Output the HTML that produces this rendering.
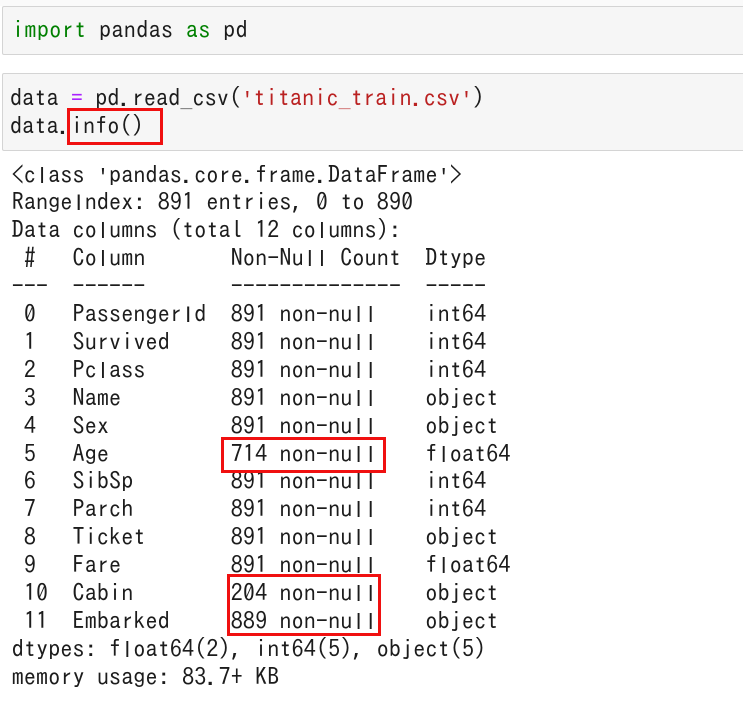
<!DOCTYPE html>
<html>
<head>
<meta charset="utf-8">
<style>
html,body{margin:0;padding:0;background:#fff;width:743px;height:705px;overflow:hidden}
body{position:relative;font-family:"IPAGothic","Liberation Mono",monospace;color:#1c1c1c}
.cell{position:absolute;left:2px;width:745px;box-sizing:border-box;background:#f6f6f6;border:1px solid #d4d4d4;border-radius:2px}
pre{position:absolute;margin:0;font-family:inherit;font-size:24px;letter-spacing:.17px;white-space:pre}
.out{left:11.7px;top:160.5px;line-height:27.9px}
.box{position:absolute;box-sizing:border-box;border:3px solid #f01010}
.k{color:#008000}.o{color:#aa22ff}.s{color:#ba2121}
.q{font-family:"Liberation Mono",monospace;font-size:20.28px;letter-spacing:0;line-height:0}
b{font-weight:normal;font-family:"Liberation Sans",sans-serif;font-size:22px;letter-spacing:0;line-height:0;padding:0 3.64px}
b.i{padding:0 3.03px}
</style>
</head>
<body>
<div style="position:absolute;left:0;top:0;width:743px;height:6px;background:#fafafa"></div>
<div class="cell" style="top:6px;height:49px"></div>
<div class="cell" style="top:73px;height:78px"></div>
<pre style="left:12px;top:15px;line-height:28px;letter-spacing:.42px"><span class="k">import</span> pandas <span class="k">as</span> pd</pre>
<pre style="left:10px;top:83px;line-height:28px">data <span class="o">=</span> pd.read_csv(<span class="s"><span class="q">'</span>titanic_train.csv<span class="q">'</span></span>)
data.info()</pre>
<pre class="out">&lt;c<b>l</b>ass <span class="q">'</span>pandas.core.frame.DataFrame<span class="q">'</span>&gt;
Range<b class="i">I</b>ndex: 891 entries, 0 to 890
Data co<b>l</b>umns (total 12 co<b>l</b>umns):
 #   Co<b>l</b>umn       Non-Nu<b>l</b><b>l</b> Count  Dtype
---  ------       --------------  -----
 0   Passenger<b class="i">I</b>d  891 non-nu<b>l</b><b>l</b>    int64
 1   Survived     891 non-nu<b>l</b><b>l</b>    int64
 2   Pc<b>l</b>ass       891 non-nu<b>l</b><b>l</b>    int64
 3   Name         891 non-nu<b>l</b><b>l</b>    object
 4   Sex          891 non-nu<b>l</b><b>l</b>    object
 5   Age          714 non-nu<b>l</b><b>l</b>    f<b>l</b>oat64
 6   SibSp        891 non-nu<b>l</b><b>l</b>    int64
 7   Parch        891 non-nu<b>l</b><b>l</b>    int64
 8   Ticket       891 non-nu<b>l</b><b>l</b>    object
 9   Fare         891 non-nu<b>l</b><b>l</b>    f<b>l</b>oat64
 10  Cabin        204 non-nu<b>l</b><b>l</b>    object
 11  Embarked     889 non-nu<b>l</b><b>l</b>    object
dtypes: f<b>l</b>oat64(2), int64(5), object(5)
memory usage: 83.7+ KB</pre>
<div class="box" style="left:67px;top:108px;width:96px;height:37px"></div>
<div class="box" style="left:221px;top:437px;width:165px;height:36px"></div>
<div class="box" style="left:227px;top:574px;width:154px;height:62px"></div>
</body>
</html>
